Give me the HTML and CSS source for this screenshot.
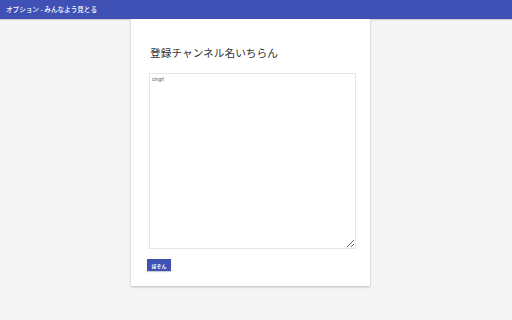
FILE: index.html
```html
<!DOCTYPE html>
<html lang="ja">
<head>
<meta charset="utf-8">
<title>オプション - みんなよう見とる</title>
<link rel="stylesheet" href="styles.css">
</head>
<body>
<header class="appbar">オプション - みんなよう見とる</header>
<main class="page">
  <section class="card">
    <h1 class="title">登録チャンネル名いちらん</h1>
    <textarea class="list">cingrl</textarea>
    <button class="save">ほぞん</button>
  </section>
</main>
</body>
</html>
```
FILE: styles.css
```css
html, body {
  margin: 0;
  padding: 0;
  background: #f4f4f4;
  font-family: "Noto Sans CJK JP", "Noto Sans", sans-serif;
  height: 100%;
}
.appbar {
  height: 19px;
  background: #3f51b5;
  color: #fff;
  font-size: 6.6px;
  font-weight: 500;
  line-height: 19px;
  padding-left: 6px;
  box-shadow: 0 1px 1px rgba(0,0,0,0.15);
}
.page {
  display: flex;
  padding-left: 131px;
}
.card {
  width: 239px;
  height: 267px;
  background: #fff;
  box-shadow: 0 1px 2px rgba(0,0,0,0.25);
  box-sizing: border-box;
  padding: 27px 0 0 16px;
  display: flex;
  flex-direction: column;
  align-items: flex-start;
}
.title {
  margin: 0 0 0 3px;
  font-size: 10.7px;
  font-weight: normal;
  color: #333;
  line-height: 13px;
}
.list {
  margin: 14px 0 0 2px;
  width: 207px;
  height: 176px;
  box-sizing: border-box;
  border: 1px solid #e6e6e6;
  padding: 2px;
  font-family: "Liberation Sans", sans-serif;
  font-size: 5px;
  color: #555;
  resize: vertical;
  outline: none;
}
.save {
  margin-top: 10px;
  width: 24px;
  height: 12px;
  padding: 0;
  border: none;
  background: #3f51b5;
  color: #fff;
  font-family: "Noto Sans CJK JP", sans-serif;
  font-size: 5px;
  font-weight: bold;
  box-shadow: 0 1px 1px rgba(0,0,0,0.2);
}
```
